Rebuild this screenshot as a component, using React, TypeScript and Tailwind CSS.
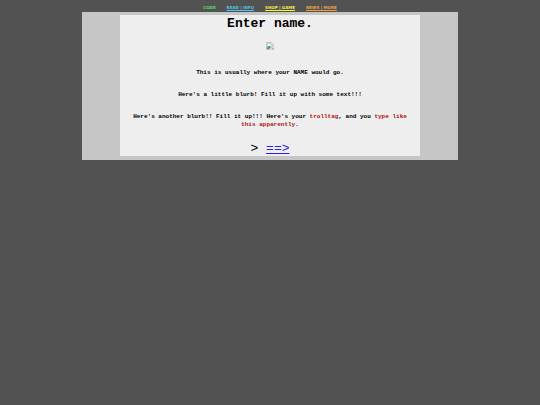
import React from "react"

const links = [
  { label: "READ | INFO", className: "text-[#4fc3e8]" },
  { label: "SHOP | GAME", className: "text-[#f5f03c]" },
  { label: "NEWS | MORE", className: "text-[#f2a03c]" },
]

function MissingImage() {
  return (
    <svg role="img" aria-label="Missing image" viewBox="0 0 16 16" className="size-2">
      <path d="M1 1h9l5 5v9H1z" fill="#c9d8f0" stroke="#b0b4ba" strokeWidth="1.5" />
      <path d="M4 6a2 2 0 0 1 4-1 2 2 0 0 1 2 3H4z" fill="#ffffff" />
      <path d="M2 14v-3l4-4 4 3-4 4z" fill="#4fa54a" />
      <path d="M10 1v5h5z" fill="#f4f4f4" stroke="#b0b4ba" />
      <path d="M8 14l6-5v5z" fill="#6fb06a" />
      <path d="M6 16L16 8v2L9 16z" fill="#eeeeee" />
    </svg>
  )
}

export default function App() {
  return (
    <div className="flex min-h-screen flex-col items-center bg-[#525252] font-['Liberation_Mono',monospace] text-black">
      <nav className="flex h-3 items-center justify-center gap-[11px] pt-[3px] font-['DejaVu_Sans',sans-serif] text-[4px] leading-[6px] font-bold">
        <span className="text-[#4be364]">CODE</span>
        {links.map((link) => (
          <a key={link.label} href="#" className={`underline ${link.className}`}>
            {link.label}
          </a>
        ))}
      </nav>

      <main className="flex w-[70%] max-w-[376px] justify-center bg-[#c6c6c6] pt-[3px] pb-1">
        <div className="flex w-4/5 flex-col items-center bg-[#eeeeee] px-1 text-center">
          <h1 className="pt-px text-[13px] leading-4 font-bold">Enter name.</h1>
          <div className="pt-[10px] pb-[19px]">
            <MissingImage />
          </div>
          <div className="flex flex-col gap-[14px] px-2 text-[6px] leading-[8px] font-bold">
            <p>This is usually where your NAME would go.</p>
            <p>Here's a little blurb! Fill it up with some text!!!</p>
            <p>
              Here's another blurb!! Fill it up!!! Here's your{" "}
              <span className="text-[#b01010]">trolltag</span>, and you{" "}
              <span className="text-[#b01010]">type like this apparently</span>.
            </p>
          </div>
          <p className="pt-[13px] text-[13px] leading-[14px]">
            &gt;{" "}
            <a href="#" className="text-[#2a22d8] underline">
              ==&gt;
            </a>
          </p>
        </div>
      </main>
    </div>
  )
}
